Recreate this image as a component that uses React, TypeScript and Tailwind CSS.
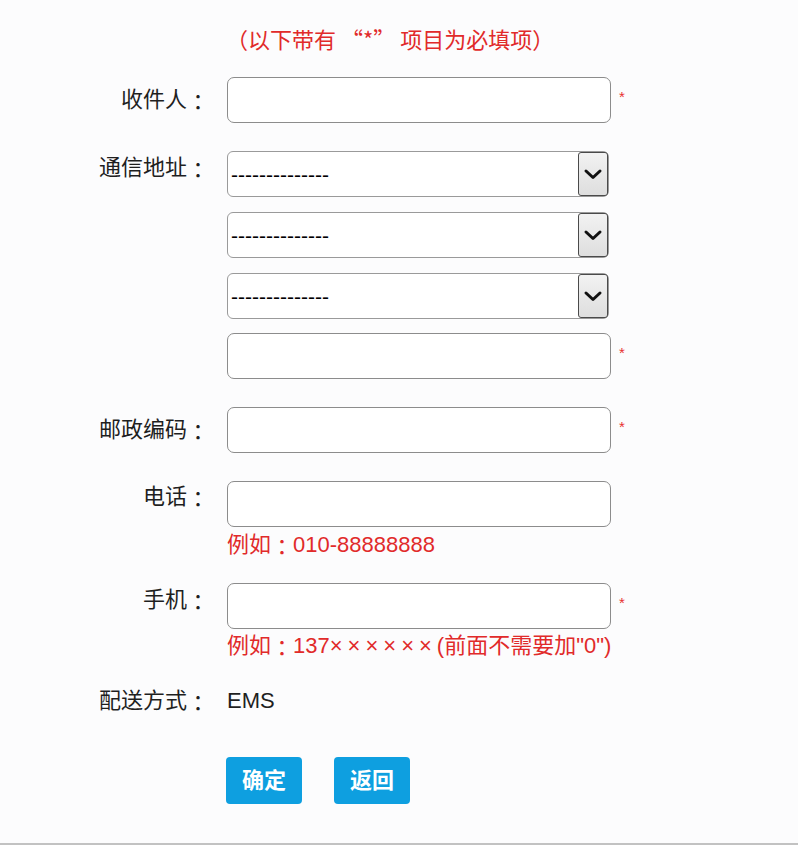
const font = "font-['Liberation_Sans','Noto_Sans_CJK_SC',sans-serif]"

function Colon() {
  return <span className="font-['Noto_Sans_CJK_JP',sans-serif] leading-none">：</span>
}

function Label({ text, pt = '' }: { text: string; pt?: string }) {
  return (
    <div className={`flex h-[24px] w-[209px] shrink-0 items-center justify-end text-[22px] leading-[24px] text-[#1f1f1f] ${pt}`}>
      {text}
      <Colon />
    </div>
  )
}

function Star() {
  return <span className="ml-[8px] -mt-[8px] text-[15px] leading-none text-[#e83030]">*</span>
}

function TextBox() {
  return <div className="h-[46px] w-[384px] rounded-[7px] border border-[#8c8c8c] bg-white" />
}

function SelectBox() {
  return (
    <div className="flex h-[46px] w-[382px] items-center rounded-[6px] border border-[#9a9a9a] bg-white pl-[3px]">
      <span className="flex-1 text-[21px] leading-none text-black">--------------</span>
      <div className="flex h-[44px] w-[30px] items-center justify-center rounded-[3px] border border-[#4a4a4a] bg-gradient-to-b from-[#f2f2f2] to-[#dedede]">
        <svg width="20" height="14" viewBox="0 0 20 14">
          <path d="M3 4 L10 10.5 L17 4" fill="none" stroke="#111" strokeWidth="3" strokeLinecap="round" strokeLinejoin="round" />
        </svg>
      </div>
    </div>
  )
}

function Hint({ children, mt }: { children: React.ReactNode; mt: string }) {
  return (
    <div className={`${mt} flex h-[24px] items-center whitespace-nowrap text-[22px] leading-[24px] text-[#e12a2a]`}>
      {children}
    </div>
  )
}

export default function App() {
  return (
    <div className={`h-[845px] w-[798px] border-b-2 border-[#c2c2c2] bg-[#fcfcfd] pt-[23px] ${font}`}>
      {/* notice */}
      <div className="ml-[226px] h-[30px] font-['Noto_Sans_CJK_SC',sans-serif] text-[22px] leading-[30px] text-[#e12a2a]">
        （以下带有 “*” 项目为必填项）
      </div>

      {/* 收件人 */}
      <div className="mt-[24px] flex h-[46px] items-center">
        <Label text="收件人" />
        <div className="ml-[18px]"><TextBox /></div>
        <Star />
      </div>

      {/* 通信地址 */}
      <div className="mt-[28px] flex">
        <Label text="通信地址" pt="mt-[5px]" />
        <div className="ml-[18px] flex flex-col">
          <SelectBox />
          <div className="mt-[15px]"><SelectBox /></div>
          <div className="mt-[15px]"><SelectBox /></div>
          <div className="mt-[14px] flex items-center">
            <TextBox />
            <Star />
          </div>
        </div>
      </div>

      {/* 邮政编码 */}
      <div className="mt-[28px] flex h-[46px] items-center">
        <Label text="邮政编码" />
        <div className="ml-[18px]"><TextBox /></div>
        <Star />
      </div>

      {/* 电话 */}
      <div className="mt-[28px] flex items-start">
        <Label text="电话" pt="mt-[4px]" />
        <div className="ml-[18px]">
          <TextBox />
          <Hint mt="mt-[6px]">例如<Colon />010-88888888</Hint>
        </div>
      </div>

      {/* 手机 */}
      <div className="mt-[26px] flex items-start">
        <Label text="手机" pt="mt-[5px]" />
        <div className="ml-[18px]">
          <div className="flex items-center">
            <TextBox />
            <Star />
          </div>
          <Hint mt="mt-[5px]">
            例如<Colon />137<span className="tracking-[5px]">××××××</span>(前面不需要加"0")
          </Hint>
        </div>
      </div>

      {/* 配送方式 */}
      <div className="mt-[31px] flex h-[24px] items-center">
        <Label text="配送方式" />
        <div className="ml-[18px] text-[22px] leading-[24px] text-[#1f1f1f]">EMS</div>
      </div>

      {/* buttons */}
      <div className="ml-[226px] mt-[44px] flex gap-[32px]">
        <button className="h-[47px] w-[76px] rounded-[4px] bg-[#0e9fe0] text-[22px] font-bold text-white">确定</button>
        <button className="h-[47px] w-[76px] rounded-[4px] bg-[#0e9fe0] text-[22px] font-bold text-white">返回</button>
      </div>
    </div>
  )
}
